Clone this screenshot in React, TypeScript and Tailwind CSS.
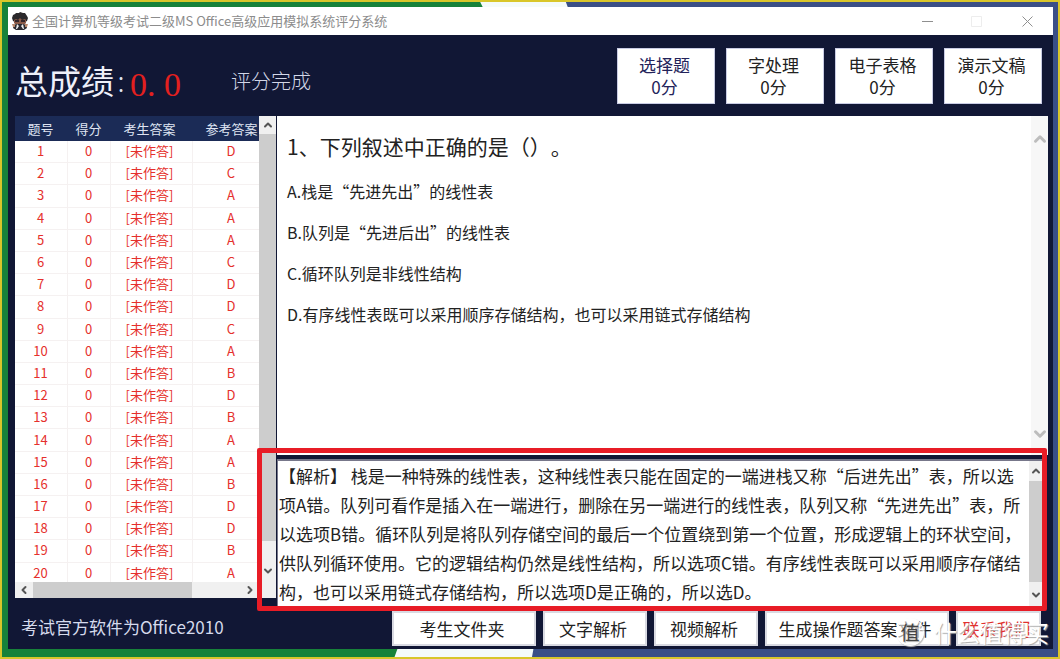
import type { ReactNode } from "react";
import { ChevronDown, ChevronLeft, ChevronRight, ChevronUp } from "lucide-react";

const ANSWERS = ["D", "C", "A", "A", "A", "C", "D", "D", "C", "A", "B", "D", "B", "A", "A", "B", "D", "D", "B", "A"];

const SCORES = [
  { name: "选择题", score: "0分", active: true },
  { name: "字处理", score: "0分" },
  { name: "电子表格", score: "0分" },
  { name: "演示文稿", score: "0分" },
];

const OPTIONS = [
  "A.栈是“先进先出”的线性表",
  "B.队列是“先进后出”的线性表",
  "C.循环队列是非线性结构",
  "D.有序线性表既可以采用顺序存储结构，也可以采用链式存储结构",
];

const EXPLANATION = [
  "【解析】 栈是一种特殊的线性表，这种线性表只能在固定的一端进栈又称“后进先出”表，所以选",
  "项A错。队列可看作是插入在一端进行，删除在另一端进行的线性表，队列又称“先进先出”表，所",
  "以选项B错。循环队列是将队列存储空间的最后一个位置绕到第一个位置，形成逻辑上的环状空间，",
  "供队列循环使用。它的逻辑结构仍然是线性结构，所以选项C错。有序线性表既可以采用顺序存储结",
  "构，也可以采用链式存储结构，所以选项D是正确的，所以选D。",
];

function Wallpaper() {
  return (
    <svg
      className="absolute inset-0 h-full w-full"
      viewBox="0 0 1060 659"
      preserveAspectRatio="none"
      aria-hidden="true"
    >
      <rect width="1060" height="659" fill="#17823a" />
      <path d="M480 0L484 8L398 648L394 659H1060V0Z" fill="#f4fbfa" />
      <path d="M566 0H1060V659H532L534 648L569 8Z" fill="#3a4f86" />
    </svg>
  );
}

function Avatar() {
  return (
    <svg className="h-[18px] w-[18px]" viewBox="0 0 18 18" aria-hidden="true">
      <path d="M1 6L2 3L4 2L5 1H8L9 0L12 1L14 1L16 4L17 6L16 9L14 10H4L2 9Z" fill="#2b292b" />
      <path d="M3 8L5 7L7 8L9 6L11 8L14 7L15 8V11L13 13H5L3 11Z" fill="#8a5a48" />
      <path d="M4 8H8V10H4ZM10 8H14V10H10Z" fill="#33262a" />
      <path d="M3 13L6 12H12L15 13L16 16L13 18H5L2 16Z" fill="#2a2a30" />
      <path d="M6 12L8 14L6 17H5ZM12 12L10 14L12 17H13Z" fill="#eeeeef" />
      <path d="M1 12H4V15H2ZM14 12H17L16 15H14Z" fill="#b9886c" />
    </svg>
  );
}

function TitleBar() {
  return (
    <header className="flex h-7 shrink-0 items-center bg-white pl-[3px]">
      <Avatar />
      <h1 className="ml-[3px] flex-1 whitespace-nowrap text-[13px] text-[#8c8c8c]">
        全国计算机等级考试二级MS Office高级应用模拟系统评分系统
      </h1>
      <div className="flex text-[#8f8f8f]">
        <button type="button" aria-label="最小化" className="flex w-[49px] justify-center">
          <svg width="11" height="11" viewBox="0 0 11 11" fill="none" stroke="currentColor">
            <path d="M0 5.5H11" />
          </svg>
        </button>
        <button type="button" aria-label="最大化" disabled className="flex w-[49px] justify-center text-[#ededed]">
          <svg width="11" height="11" viewBox="0 0 11 11" fill="none" stroke="currentColor">
            <path d="M.5 .5H10.5V10.5H.5Z" />
          </svg>
        </button>
        <button type="button" aria-label="关闭" className="flex w-[52px] justify-center">
          <svg width="11" height="11" viewBox="0 0 11 11" fill="none" stroke="currentColor">
            <path d="M.5 .5L10.5 10.5M10.5 .5L.5 10.5" />
          </svg>
        </button>
      </div>
    </header>
  );
}

function Summary() {
  return (
    <section className="flex h-[81px] shrink-0 items-start pl-[7px] pr-[11px]">
      <div className="flex flex-1 items-start whitespace-nowrap pt-[22px]">
        <span className="text-[33px] leading-[46px] text-[#eef0fa]">总成绩</span>
        <span className="w-[14px] text-center text-[28px] font-light leading-[46px] text-[#dfe3f2]">:</span>
        <span className="ml-[2px] pt-[5px] font-['Liberation_Serif',serif] text-[34px] leading-[46px] text-[#e3201f]">
          0. 0
        </span>
        <span className="ml-[50px] text-[20px] font-light leading-[48px] text-[#d3d7e8]">评分完成</span>
      </div>
      <div className="flex gap-[11px] pt-[13px]">
        {SCORES.map((s) => (
          <button
            key={s.name}
            type="button"
            className={`h-14 w-[98px] border border-[#c9cce4] bg-white p-0 pr-[3px] text-[17px] leading-[22px] ${
              s.active ? "text-[#23235a]" : "text-[#222]"
            }`}
          >
            <span className="block">{s.name}</span>
            <span className="block">{s.score}</span>
          </button>
        ))}
      </div>
    </section>
  );
}

function AnswerTable() {
  const cell = "border-b border-r border-[#f5f1f1] p-0 pb-[2px] text-center";
  return (
    <div className="flex w-[261px] shrink-0 flex-col self-start">
      <div className="flex">
        <div className="h-[466px] w-[244px] overflow-hidden bg-white">
          <table className="h-[469px] w-[255px] table-fixed border-separate border-spacing-0 text-[13px] leading-[19px]">
            <thead className="bg-[#1b2b56] text-[#dfe4f2]">
              <tr>
                <th className="h-[25px] w-[53px] p-0 pr-[2px] font-normal">题号</th>
                <th className="w-[43px] p-0 pr-[2px] font-normal">得分</th>
                <th className="w-[82px] p-0 pr-[5px] font-normal">考生答案</th>
                <th className="w-[77px] p-0 font-normal">参考答案</th>
              </tr>
            </thead>
            <tbody className="text-[#e5302c]">
              {ANSWERS.map((answer, i) => (
                <tr key={i}>
                  <td className={`${cell} pr-px`}>{i + 1}</td>
                  <td className={`${cell} pr-px`}>0</td>
                  <td className={`${cell} pr-1`}>[未作答]</td>
                  <td className={cell}>{answer}</td>
                </tr>
              ))}
            </tbody>
          </table>
        </div>
        <div className="flex flex-1 flex-col items-center bg-[#f0f0f0] text-[#555]">
          <ChevronUp className="my-[3px] h-3 w-3 shrink-0" strokeWidth={4} />
          <div className="h-[407px] w-full bg-[#cdcdcd]" />
          <ChevronDown className="mt-6 h-3 w-3 shrink-0" strokeWidth={4} />
        </div>
      </div>
      <div className="flex h-4 items-center bg-[#f0f0f0] pl-[3px] pr-5 text-[#555]">
        <ChevronLeft className="h-3 w-3" strokeWidth={4} />
        <div className="ml-[3px] h-full w-[159px] bg-[#cdcdcd]" />
        <ChevronRight className="ml-auto h-3 w-3" strokeWidth={4} />
      </div>
    </div>
  );
}

function Question() {
  return (
    <article className="flex h-[339px] bg-white text-[#222]">
      <div className="min-w-0 flex-1 whitespace-nowrap pl-[10px] pt-[15px]">
        <h2 className="text-[21px] leading-[30px] [text-spacing-trim:space-all]">1、下列叙述中正确的是（）。</h2>
        <ul className="mt-[10px] text-[16px] leading-[41px]">
          {OPTIONS.map((option) => (
            <li key={option}>{option}</li>
          ))}
        </ul>
      </div>
      <div className="flex w-[17px] flex-col items-center justify-between bg-[#f7f7f7] pb-3 pt-[14px] text-[#bdbdbd]">
        <ChevronUp className="h-[18px] w-[18px]" strokeWidth={4} />
        <ChevronDown className="h-[18px] w-[18px]" strokeWidth={4} />
      </div>
    </article>
  );
}

function Explanation() {
  return (
    <article className="mr-[6px] mt-1 flex h-[147px] border-l border-t-2 border-[#77778a] bg-white">
      <p className="min-w-0 flex-1 whitespace-nowrap pl-px text-[17px] leading-[29px] text-[#222]">
        {EXPLANATION.map((line) => (
          <span key={line} className="block">
            {line}
          </span>
        ))}
      </p>
      <div className="flex w-[13px] flex-col items-center bg-[#f0f0f0] text-[#555]">
        <ChevronUp className="my-1 h-3 w-3 shrink-0" strokeWidth={4} />
        <div className="h-[101px] w-full bg-[#cdcdcd]" />
        <ChevronDown className="mt-[7px] h-3 w-3 shrink-0" strokeWidth={4} />
      </div>
    </article>
  );
}

function FooterButton({ className, children }: { className: string; children: ReactNode }) {
  return (
    <button
      type="button"
      className={`h-[35px] whitespace-nowrap border-2 border-[#d9dae2] bg-white p-0 pr-1 text-[17px] leading-[24px] ${className}`}
    >
      {children}
    </button>
  );
}

function Footer() {
  return (
    <footer className="relative flex h-[38px] shrink-0 items-start pl-[13px] pr-[12px]">
      <p className="flex-1 whitespace-nowrap text-[17px] leading-[32px] text-[#d5daec]">考试官方软件为Office2010</p>
      <div className="flex gap-[7px] text-[#222]">
        <FooterButton className="w-[144px]">考生文件夹</FooterButton>
        <FooterButton className="w-[104px]">文字解析</FooterButton>
        <FooterButton className="w-[104px]">视频解析</FooterButton>
        <FooterButton className="w-[184px]">生成操作题答案文件</FooterButton>
        <FooterButton className="w-[85px] text-[#e0302e]">联系我们</FooterButton>
      </div>
      <div className="pointer-events-none absolute right-1 top-1 flex items-center gap-[10px] whitespace-nowrap text-white [text-shadow:1px_1px_1px_#aaa]">
        <span className="flex h-7 w-7 items-center justify-center rounded-full border border-white bg-white/60 text-[19px] leading-[26px] text-[#444] shadow-[1px_1px_1px_#bbb]">
          值
        </span>
        <span className="text-[23px] leading-[34px]">什么值得买</span>
      </div>
    </footer>
  );
}

export default function App() {
  return (
    <div
      lang="zh-CN"
      className="relative flex min-h-screen flex-col border-2 border-[#d9c62a] px-[6px] pb-2 pt-[5px] font-['Noto_Sans_CJK_SC',sans-serif]"
    >
      <Wallpaper />
      <div className="relative mr-[-1px] flex flex-1 flex-col bg-[#111735]">
        <TitleBar />
        <Summary />
        <main className="flex flex-1 pl-[7px] pr-[5px]">
          <AnswerTable />
          <div className="relative ml-px min-w-0 flex-1">
            <Question />
            <Explanation />
            <div className="pointer-events-none absolute -left-5 right-px top-[332px] z-10 h-[163px] rounded-[2px] border-[5px] border-[#e81c26]" />
          </div>
        </main>
        <Footer />
      </div>
    </div>
  );
}
